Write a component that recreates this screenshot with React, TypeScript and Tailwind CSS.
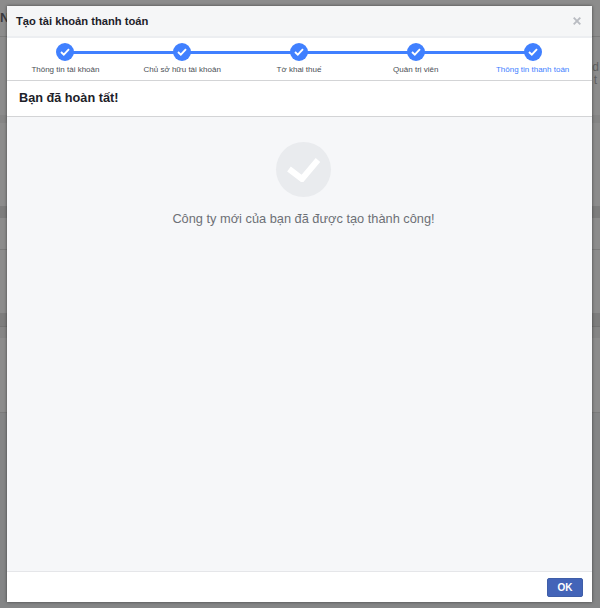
const steps = [
  "Thông tin tài khoản",
  "Chủ sở hữu tài khoản",
  "Tờ khai thuế",
  "Quản trị viên",
  "Thông tin thanh toán",
];

export default function App() {
  return (
    <div className="relative w-[600px] h-[608px] overflow-hidden bg-[#8c8c8c] font-['Liberation_Sans',Arial,sans-serif]">
      {/* page behind the dialog */}
      <div className="flex flex-col h-full">
        <div className="h-[37px] shrink-0 border-b border-[#7b7b7b] pt-[11px] text-[13px] leading-[14px] font-bold text-[#3a3a3e]">N</div>
        <div className="h-[78px] shrink-0 flex flex-col items-end pt-[24px] pr-[1px] text-[12px] leading-[13px] text-[#5f5f5f]">
          <span>nd</span>
          <span className="pr-[2px]">t</span>
        </div>
        <div className="h-[8px] shrink-0 bg-[#858585]" />
        <div className="h-[83px] shrink-0" />
        <div className="h-[12px] shrink-0 bg-[#7d7d7d]" />
        <div className="h-[32px] shrink-0 border-b border-[#7b7b7b]" />
        <div className="h-[63px] shrink-0" />
        <div className="h-[14px] shrink-0 bg-[#7d7d7d] border-b border-[#747474]" />
        <div className="h-[11px] shrink-0 bg-[#858585]" />
        <div className="h-[75px] shrink-0 border-b border-[#7b7b7b]" />
        <div className="flex-1 bg-[#848586]" />
      </div>

      {/* dialog */}
      <div className="absolute left-[7px] top-[6px] w-[585px] h-[596px] flex flex-col bg-white shadow-[0_0_3px_rgba(0,0,0,0.5)]">
        <div className="h-[32px] shrink-0 flex items-center justify-between pl-[9px] pr-[11px] bg-[#f5f6f7] border-b-2 border-[#eceef1]">
          <span className="text-[11.2px] font-bold text-[#1d2129]">Tạo tài khoản thanh toán</span>
          <svg width="8" height="8" viewBox="0 0 8 8" className="mb-[1px]">
            <path d="M.7.7 7.3 7.3M7.3.7.7 7.3" stroke="#b9bcc2" strokeWidth="1.9" fill="none" />
          </svg>
        </div>

        {/* stepper */}
        <div className="h-[43px] shrink-0 grid grid-cols-5 pr-[1px] border-b border-[#d3d4d6]">
          {steps.map((step, i) => (
            <div key={step} className="relative flex flex-col items-center pt-[5px]">
              {i > 0 && <div className="absolute left-0 right-1/2 top-[13px] h-[3px] bg-[#4080ff]" />}
              {i < steps.length - 1 && <div className="absolute left-1/2 right-0 top-[13px] h-[3px] bg-[#4080ff]" />}
              <div className="relative w-[18px] h-[18px] rounded-full bg-[#4080ff] flex items-center justify-center">
                <svg width="10" height="8" viewBox="0 0 10 8">
                  <path d="M1 4 3.8 6.6 9 1.2" stroke="#fff" strokeWidth="1.9" fill="none" />
                </svg>
              </div>
              <span className={`mt-[3px] text-[8px] leading-[12px] whitespace-nowrap ${i === 4 ? "text-[#4080ff]" : "text-[#4b4f56]"}`}>
                {step}
              </span>
            </div>
          ))}
        </div>

        <div className="h-[36px] shrink-0 flex items-center pl-[12px] border-b border-[#d3d4d6]">
          <span className="text-[12.7px] font-bold text-[#1d2129]">Bạn đã hoàn tất!</span>
        </div>

        {/* body */}
        <div className="flex-1 flex flex-col items-center bg-[#f6f7f9] pt-[25px] pl-[8px]">
          <div className="w-[55px] h-[55px] rounded-full bg-[#e9ebee] flex items-center justify-center">
            <svg width="33" height="24" viewBox="0 0 33 24">
              <path d="M2 11 15 21 31 2" stroke="#fff" strokeWidth="6" fill="none" />
            </svg>
          </div>
          <p className="mt-[13px] text-[12.8px] leading-[18px] text-[#6d7076]">Công ty mới của bạn đã được tạo thành công!</p>
        </div>

        <div className="h-[31px] shrink-0 flex items-center justify-end pr-[9px] border-t border-[#e5e6e9]">
          <button className="w-[36px] h-[19px] rounded-[2px] bg-[#4364b8] border border-[#3f5ea8] text-white text-[10px] font-bold flex items-center justify-center">
            OK
          </button>
        </div>
      </div>
    </div>
  );
}
